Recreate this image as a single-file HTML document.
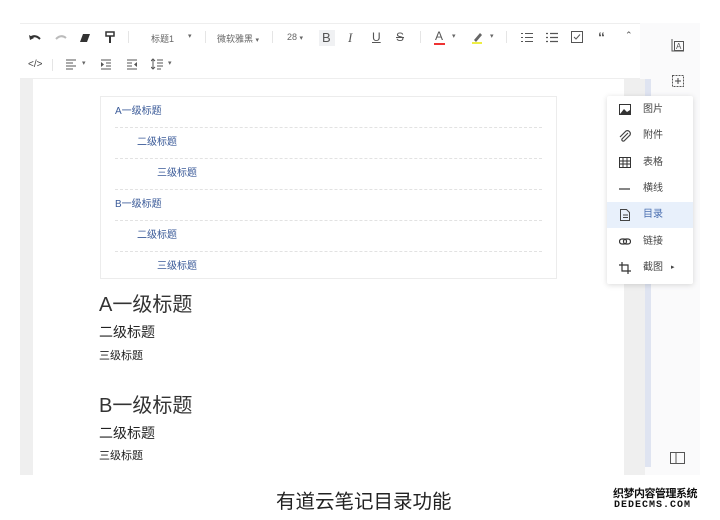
<!DOCTYPE html>
<html><head><meta charset="utf-8"><style>
*{margin:0;padding:0;box-sizing:border-box}
body{width:720px;height:520px;background:#fff;position:relative;overflow:hidden;font-family:"Liberation Sans","Noto Sans CJK SC",sans-serif;color:#333}
.a{position:absolute}
.tb{color:#666;font-size:9px}
.toc{position:absolute;left:100px;top:96px;width:457px;height:183px;border:1px solid #ececec}
.toc div{position:absolute;left:14px;right:14px;height:31px;border-bottom:1px dashed #e2e2e2;font-size:10px;color:#3a5a98;line-height:29px}
.menu{position:absolute;left:607px;top:96px;width:86px;height:188px;background:#fff;box-shadow:0 1px 6px rgba(0,0,0,.15);border-radius:2px}
.mi{position:absolute;left:0;width:86px;height:26px;font-size:10px;color:#444;line-height:26px}
.mi span{position:absolute;left:36px}
.mi svg{position:absolute;left:12px;top:7px}
</style></head><body>
<div class="a" style="left:20px;top:23px;width:620px;height:1px;background:#eee"></div>
<div class="a" style="left:20px;top:78px;width:620px;height:1px;background:#eee"></div>
<div class="a" style="left:640px;top:23px;width:60px;height:452px;background:#fafafb"></div>
<div class="a" style="left:20px;top:79px;width:13px;height:396px;background:#efefef"></div>
<div class="a" style="left:624px;top:79px;width:21px;height:396px;background:#efefef"></div>
<div class="a" style="left:645px;top:79px;width:6px;height:388px;background:#dfe4f1"></div>
<svg class="a" style="left:28px;top:33px" width="14" height="10"><path d="M2 5 Q7 1 12 6" stroke="#333" stroke-width="2" fill="none"/><path d="M1 2 L2 7 L6 5Z" fill="#333"/></svg>
<svg class="a" style="left:54px;top:33px" width="14" height="10"><path d="M12 5 Q7 1 2 6" stroke="#bbb" stroke-width="2" fill="none"/></svg>
<svg class="a" style="left:79px;top:32px" width="12" height="12"><path d="M4 2 L11 2 L8 10 L1 10Z" fill="#333"/></svg>
<svg class="a" style="left:105px;top:31px" width="10" height="13"><rect x="1" y="1" width="8" height="4" fill="none" stroke="#333" stroke-width="1.5"/><path d="M5 5 V12" stroke="#333" stroke-width="2"/></svg>
<div class="a" style="left:128px;top:31px;width:1px;height:12px;background:#e5e5e5"></div>
<div class="a tb" style="left:151px;top:32px">标题1</div><div class="a tb" style="left:188px;top:32px;font-size:7px">▾</div>
<div class="a" style="left:205px;top:31px;width:1px;height:12px;background:#e5e5e5"></div>
<div class="a tb" style="left:217px;top:32px">微软雅黑 <span style="font-size:7px">▾</span></div>
<div class="a" style="left:272px;top:31px;width:1px;height:12px;background:#e5e5e5"></div>
<div class="a tb" style="left:287px;top:32px">28 <span style="font-size:7px">▾</span></div>
<div class="a" style="left:319px;top:30px;width:16px;height:16px;background:#f0f1f3"></div>
<div class="a" style="left:322px;top:30px;font-size:13px;color:#555">B</div>
<div class="a" style="left:348px;top:30px;font-size:13px;color:#555;font-family:'Liberation Serif';font-style:italic">I</div>
<div class="a" style="left:372px;top:30px;font-size:12px;color:#555;text-decoration:underline">U</div>
<div class="a" style="left:396px;top:30px;font-size:12px;color:#555;text-decoration:line-through">S</div>
<div class="a" style="left:420px;top:31px;width:1px;height:12px;background:#e5e5e5"></div>
<div class="a" style="left:435px;top:29px;font-size:12px;color:#555">A</div><div class="a" style="left:434px;top:43px;width:11px;height:2px;background:#e33"></div><div class="a tb" style="left:452px;top:32px;font-size:7px">▾</div>
<svg class="a" style="left:471px;top:31px" width="12" height="14"><path d="M3 9 L9 2 L11 4 L5 11Z" fill="#666"/><rect x="1" y="11" width="10" height="2" fill="#ee4"/></svg><div class="a tb" style="left:490px;top:32px;font-size:7px">▾</div>
<div class="a" style="left:506px;top:31px;width:1px;height:12px;background:#e5e5e5"></div>
<svg class="a" style="left:521px;top:32px" width="12" height="11"><path d="M0 1.5h2M4 1.5h8M0 5.5h2M4 5.5h8M0 9.5h2M4 9.5h8" stroke="#555"/></svg>
<svg class="a" style="left:546px;top:32px" width="12" height="11"><path d="M0 1.5h2M4 1.5h8M0 5.5h2M4 5.5h8M0 9.5h2M4 9.5h8" stroke="#555" stroke-width="1.2"/></svg>
<svg class="a" style="left:571px;top:31px" width="12" height="12"><rect x="0.5" y="0.5" width="11" height="11" fill="none" stroke="#555"/><path d="M3 6 L5 8 L9 3.5" stroke="#555" fill="none"/></svg>
<div class="a" style="left:598px;top:29px;font-size:14px;color:#555;font-weight:bold">“</div>
<div class="a" style="left:625px;top:30px;font-size:9px;color:#555">⌃</div>
<div class="a tb" style="left:28px;top:59px;font-size:10px;color:#444">&lt;/&gt;</div>
<div class="a" style="left:52px;top:59px;width:1px;height:12px;background:#e5e5e5"></div>
<svg class="a" style="left:66px;top:59px" width="11" height="11"><path d="M0 1h10M0 4h7M0 7h10M0 10h7" stroke="#555"/></svg><div class="a tb" style="left:82px;top:59px;font-size:7px">▾</div>
<svg class="a" style="left:101px;top:59px" width="11" height="11"><path d="M0 1h10M5 4h5M5 7h5M0 10h10" stroke="#555"/><path d="M0 3 L3 5.5 L0 8Z" fill="#555"/></svg>
<svg class="a" style="left:127px;top:59px" width="11" height="11"><path d="M0 1h10M0 4h5M0 7h5M0 10h10" stroke="#555"/><path d="M10 3 L7 5.5 L10 8Z" fill="#555"/></svg>
<svg class="a" style="left:151px;top:58px" width="12" height="12"><path d="M2 1v10M0 3l2-2 2 2M0 9l2 2 2-2M6 2h6M6 5h6M6 8h6M6 11h4" stroke="#555" fill="none"/></svg><div class="a tb" style="left:168px;top:59px;font-size:7px">▾</div>
<svg class="a" style="left:671px;top:38px" width="14" height="14"><path d="M1 1v12h12" stroke="#555" fill="none"/><rect x="3.5" y="3.5" width="9" height="9" fill="none" stroke="#555"/><text x="5" y="11" font-size="8" fill="#555" font-family="Liberation Sans">A</text></svg>
<svg class="a" style="left:672px;top:75px" width="12" height="12"><rect x="0.5" y="0.5" width="11" height="11" fill="none" stroke="#555" stroke-dasharray="2 1"/><path d="M6 3v6M3 6h6" stroke="#444"/></svg>
<svg class="a" style="left:670px;top:452px" width="15" height="12"><rect x="0.5" y="0.5" width="14" height="11" fill="none" stroke="#555"/><path d="M6 0v12" stroke="#555"/></svg>
<div class="toc">
<div style="top:0">A一级标题</div>
<div style="top:31px;padding-left:22px">二级标题</div>
<div style="top:62px;padding-left:42px">三级标题</div>
<div style="top:93px">B一级标题</div>
<div style="top:124px;padding-left:22px">二级标题</div>
<div style="top:155px;padding-left:42px;border:none">三级标题</div>
</div>
<div class="a" style="left:99px;top:288px;font-size:20px;color:#333">A一级标题</div>
<div class="a" style="left:99px;top:322px;font-size:14px;color:#222">二级标题</div>
<div class="a" style="left:99px;top:347px;font-size:11px;color:#222">三级标题</div>
<div class="a" style="left:99px;top:389px;font-size:20px;color:#333">B一级标题</div>
<div class="a" style="left:99px;top:423px;font-size:14px;color:#222">二级标题</div>
<div class="a" style="left:99px;top:447px;font-size:11px;color:#222">三级标题</div>
<div class="menu">
<div class="mi" style="top:1px"><svg width="12" height="11"><rect x="0.5" y="0.5" width="11" height="10" fill="none" stroke="#333"/><path d="M1 10 L5 5 L8 8 L11 6 V10Z" fill="#333"/></svg><span>图片</span></div>
<div class="mi" style="top:27px"><svg width="12" height="12"><path d="M9 3 L3 9 A1.5 1.5 0 0 0 5 11 L11 5 A3 3 0 0 0 7 1 L1 7" stroke="#444" fill="none" stroke-width="1.2"/></svg><span>附件</span></div>
<div class="mi" style="top:54px"><svg width="12" height="11"><rect x="0.5" y="0.5" width="11" height="10" fill="none" stroke="#333"/><path d="M0 4h12M0 7h12M4 0v11M8 0v11" stroke="#333"/></svg><span>表格</span></div>
<div class="mi" style="top:80px"><svg width="12" height="11"><path d="M0 6h11" stroke="#333" stroke-width="1.2"/></svg><span>横线</span></div>
<div class="mi" style="top:106px;background:#e8f0fb;color:#4a6fb0"><svg width="12" height="12"><path d="M1.5 .5h6l3 3v8h-9z M4 6h5M4 8.5h5" fill="none" stroke="#444"/></svg><span>目录</span></div>
<div class="mi" style="top:133px"><svg width="12" height="11"><rect x="0.5" y="3" width="7" height="5" rx="2.5" fill="none" stroke="#333" stroke-width="1.2"/><rect x="4.5" y="3" width="7" height="5" rx="2.5" fill="none" stroke="#333" stroke-width="1.2"/></svg><span>链接</span></div>
<div class="mi" style="top:159px"><svg width="12" height="12"><path d="M3 0v9h9M0 3h9v9" fill="none" stroke="#333" stroke-width="1.2"/></svg><span>截图</span><b style="position:absolute;left:64px;font-size:7px;font-weight:normal">▸</b></div>
</div>
<div class="a" style="left:276px;top:485px;font-size:19.5px;color:#222">有道云笔记目录功能</div>
<div class="a" style="left:613px;top:485px;font-size:11px;font-weight:bold;color:#111;letter-spacing:-0.5px">织梦内容管理系统</div>
<div class="a" style="left:614px;top:500px;font-size:10px;font-weight:bold;color:#111;font-family:'Liberation Mono';letter-spacing:1px">DEDECMS.COM</div>
</body></html>
